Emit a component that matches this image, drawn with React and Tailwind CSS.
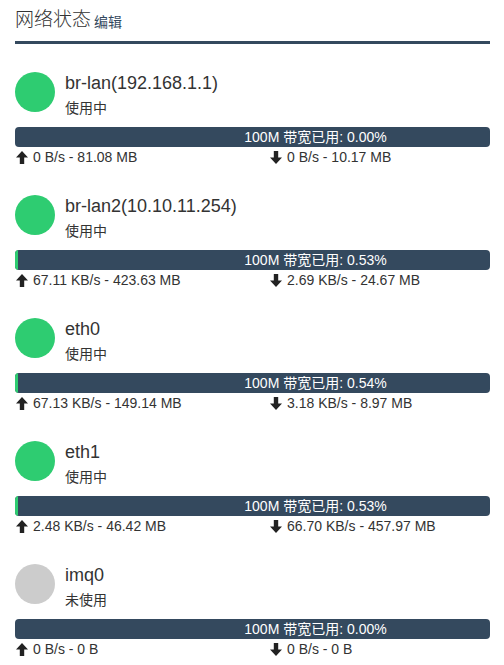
import React from "react";

const ifaces = [
  { name: "br-lan(192.168.1.1)", used: true, pct: "0.00", w: 0, up: "0 B/s - 81.08 MB", down: "0 B/s - 10.17 MB" },
  { name: "br-lan2(10.10.11.254)", used: true, pct: "0.53", w: 3, up: "67.11 KB/s - 423.63 MB", down: "2.69 KB/s - 24.67 MB" },
  { name: "eth0", used: true, pct: "0.54", w: 3, up: "67.13 KB/s - 149.14 MB", down: "3.18 KB/s - 8.97 MB" },
  { name: "eth1", used: true, pct: "0.53", w: 3, up: "2.48 KB/s - 46.42 MB", down: "66.70 KB/s - 457.97 MB" },
  { name: "imq0", used: false, pct: "0.00", w: 0, up: "0 B/s - 0 B", down: "0 B/s - 0 B" },
];

function Arrow({ down }) {
  return (
    <svg width="12" height="13" viewBox="0 0 12 13" className={down ? "rotate-180" : ""}>
      <path d="M6 0 L12 6.5 H8.2 V13 H3.8 V6.5 H0 Z" fill="#222" />
    </svg>
  );
}

export default function App() {
  return (
    <div className="w-[504px] h-[665px] overflow-hidden bg-white pl-[15px] pr-[14px] text-[#333] font-['Liberation_Sans','Noto_Sans_CJK_SC',sans-serif]">
      {/* header */}
      <div className="pt-[7px] pb-[8px] border-b-[3px] border-[#34495e] flex items-end">
        <span className="text-[19px] leading-[26px] font-light">网络状态</span>
        <span className="ml-[3px] text-[14px] leading-[22px] text-[#34495e]">编辑</span>
      </div>

      <div className="pt-[28px]">
        {ifaces.map((it, i) => (
          <div key={i} className="h-[123px]">
            <div className="flex h-10">
              <div className={`w-10 h-10 rounded-full shrink-0 ${it.used ? "bg-[#2ecc71]" : "bg-[#cccccc]"}`} />
              <div className="ml-[10px]">
                <div className="text-[18px] leading-[22px]">{it.name}</div>
                <div className="text-[14px] leading-[18px] mt-[5px]">{it.used ? "使用中" : "未使用"}</div>
              </div>
            </div>
            <div className="mt-[15px] h-5 rounded-[4px] bg-[#34495e] relative overflow-hidden flex">
              <div className="h-full bg-[#2ecc71]" style={{ width: it.w }} />
              <div className="absolute inset-0 pl-[126px] flex items-center justify-center text-white text-[14px]">
                100M 带宽已用: {it.pct}%
              </div>
            </div>
            <div className="flex text-[14px] leading-[16px] mt-[2px]">
              <div className="w-[255px] flex items-center gap-[5px] pl-[1px]">
                <Arrow />
                <span>{it.up}</span>
              </div>
              <div className="flex items-center gap-[5px]">
                <Arrow down />
                <span>{it.down}</span>
              </div>
            </div>
          </div>
        ))}
      </div>
    </div>
  );
}
